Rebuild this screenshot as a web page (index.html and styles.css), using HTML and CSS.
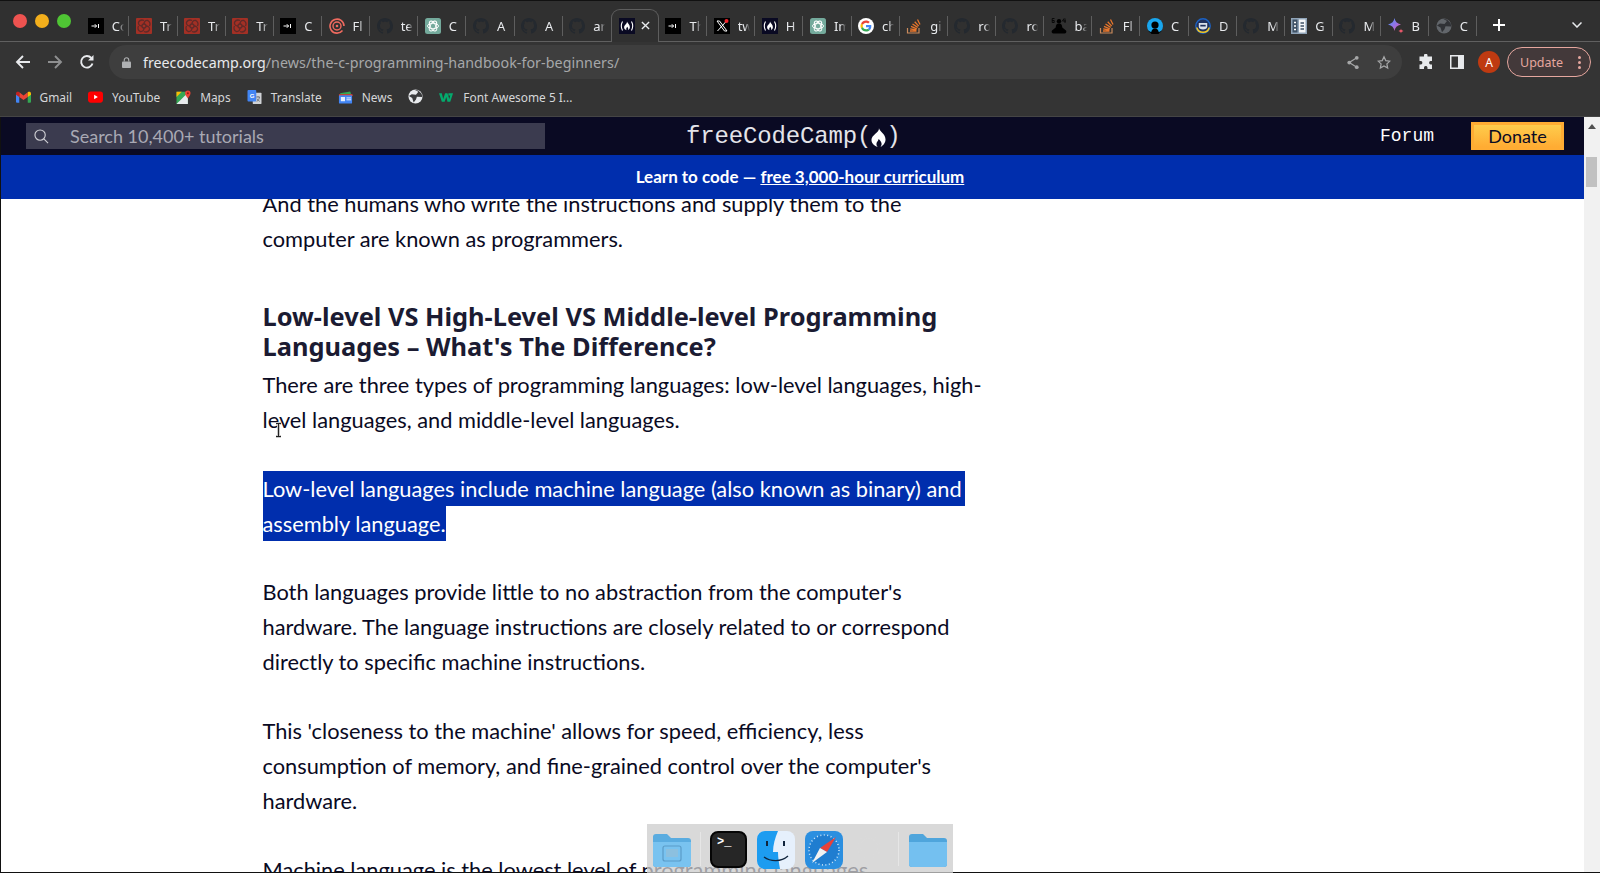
FILE: index.html
```html
<!DOCTYPE html>
<html lang="en">
<head>
<meta charset="utf-8">
<title>The C Programming Handbook for Beginners</title>
<link rel="stylesheet" href="styles.css">
</head>
<body>
<svg class="defs" width="0" height="0" aria-hidden="true">
  <symbol id="i-term" viewBox="0 0 16 16"><rect width="16" height="16" fill="#000"/><path d="M3.500 8h5M6.800 6.200 8.600 8 6.800 9.800M10.500 6v4" fill="none" stroke="#fff" stroke-width="1"/></symbol>
  <symbol id="i-red" viewBox="0 0 16 16"><rect width="16" height="16" rx="1" fill="#a33025"/><g fill="none" stroke="#5f2a28" stroke-width="1.300"><circle cx="8" cy="8" r="2"/><path d="M8 6c0-2 1-4 4-3.500M10 8c2 0 4 1 3.500 4M8 10c0 2-1 4-4 3.500M6 8c-2 0-4-1-3.500-4"/><path d="M12 2.500C14 4 14.500 6 13.500 8M13.500 12c-1.500 2-3.500 2.500-5.500 1.500M4 13.500C2 12 1.500 10 2.500 8M2.500 4C4 2 6 1.500 8 2.500"/></g></symbol>
  <symbol id="i-at" viewBox="0 0 16 16"><g fill="none" stroke="#ef6a5f"><path d="M13.500 12.500A7 7 0 1 1 15 8" stroke-width="1.600"/><circle cx="8" cy="8" r="4" stroke-width="1.400"/><circle cx="8" cy="8" r="1.300" fill="#ef6a5f" stroke="none"/></g></symbol>
  <symbol id="i-gh" viewBox="0 0 16 16"><path fill="#24292f" d="M8 0C3.580 0 0 3.580 0 8c0 3.540 2.290 6.530 5.470 7.590.4.070.55-.17.55-.38 0-.19-.01-.82-.01-1.490-2.010.37-2.530-.49-2.690-.94-.09-.23-.48-.94-.82-1.130-.28-.15-.68-.52-.01-.53.63-.01 1.080.58 1.230.82.72 1.210 1.870.87 2.330.66.070-.52.28-.87.51-1.070-1.780-.2-3.640-.89-3.640-3.950 0-.87.31-1.590.82-2.150-.08-.2-.36-1.020.08-2.120 0 0 .67-.21 2.200.82.64-.18 1.320-.27 2-.27s1.360.09 2 .27c1.530-1.040 2.200-.82 2.200-.82.44 1.100.16 1.920.08 2.120.51.56.82 1.270.82 2.150 0 3.070-1.870 3.750-3.650 3.950.29.25.54.73.54 1.480 0 1.070-.01 1.930-.01 2.200 0 .21.15.46.55.38A8.013 8.013 0 0016 8c0-4.420-3.580-8-8-8z"/></symbol>
  <symbol id="i-gpt" viewBox="0 0 16 16"><rect width="16" height="16" rx="2.500" fill="#74aa9c"/><g fill="none" stroke="#fff" stroke-width=".9"><ellipse cx="8" cy="8" rx="5.500" ry="2.700"/><ellipse cx="8" cy="8" rx="5.500" ry="2.700" transform="rotate(60 8 8)"/><ellipse cx="8" cy="8" rx="5.500" ry="2.700" transform="rotate(120 8 8)"/></g></symbol>
  <symbol id="i-fcc" viewBox="0 0 16 16"><rect width="16" height="16" fill="#0a0a23"/><path d="M3.500 3.500C1.900 6.500 1.900 9.500 3.500 12.500M12.500 3.500c1.600 3 1.600 6 0 9" fill="none" stroke="#fff" stroke-width="1.100"/><path d="M8 3.500c.4 1.700 3 3.200 2.900 5.800-.1 1.700-1.400 2.700-2 2.900.7-1.100.3-2.300-.8-3.400-.4 1.200-.9 1.400-.9 2.300 0 .5.2.9.4 1.100-1.300-.2-2.500-1.200-2.500-2.900C5.100 7 8.200 6 8 3.500z" fill="#fff"/></symbol>
  <symbol id="i-x" viewBox="0 0 16 16"><rect width="16" height="16" fill="#000"/><path d="M3 3h2.500L13 13h-2.500zM12.500 3 3.500 13" fill="none" stroke="#fff" stroke-width="1"/><circle cx="12.500" cy="3" r="2" fill="#f0222a"/></symbol>
  <symbol id="i-google" viewBox="0 0 48 48"><circle cx="24" cy="24" r="24" fill="#fff"/><g transform="translate(7.500 7.500) scale(.69)"><path fill="#EA4335" d="M24 9.500c3.540 0 6.710 1.220 9.210 3.600l6.850-6.850C35.900 2.380 30.470 0 24 0 14.620 0 6.510 5.380 2.560 13.220l7.980 6.190C12.430 13.720 17.740 9.500 24 9.500z"/><path fill="#4285F4" d="M46.980 24.550c0-1.570-.15-3.090-.38-4.550H24v9.020h12.940c-.58 2.960-2.260 5.480-4.780 7.180l7.730 6c4.510-4.180 7.090-10.360 7.090-17.650z"/><path fill="#FBBC05" d="M10.530 28.590c-.48-1.450-.76-2.990-.76-4.590s.27-3.140.76-4.590l-7.980-6.190C.92 16.460 0 20.120 0 24c0 3.880.92 7.540 2.560 10.780l7.970-6.190z"/><path fill="#34A853" d="M24 48c6.480 0 11.930-2.130 15.890-5.810l-7.730-6c-2.150 1.450-4.920 2.300-8.160 2.300-6.260 0-11.570-4.220-13.470-9.910l-7.980 6.190C6.510 42.620 14.620 48 24 48z"/></g></symbol>
  <symbol id="i-so" viewBox="0 0 16 16"><path d="M1.500 10v5h11.500v-5" fill="none" stroke="#c98a5c" stroke-width="1.200"/><path d="M4 13h6.500M4.200 10.800l6.200 1.200M5 8.400l5.800 2.500M6.500 6l5.200 3.400M8.700 3.800l4 4.300M11.500 1.500l2.500 5" fill="none" stroke="#e8762c" stroke-width="1.300"/></symbol>
  <symbol id="i-med" viewBox="0 0 16 16"><circle cx="8" cy="3.200" r="2.200" fill="#000"/><path d="M8 5.500c-2.500 0-3 1.500-3.300 4L1 12.500c-1 1 0 3 1.500 3h11c1.500 0 2.500-2 1.500-3l-3.700-3C11 7 10.500 5.500 8 5.500z" fill="#000"/><path d="M3.500.5H1.200v2h2v2H1.200v-2M13 .5l-1.500 2.500h3.500M14 .5v4.500" stroke="#000" stroke-width=".8" fill="none"/></symbol>
  <symbol id="i-blue" viewBox="0 0 16 16"><circle cx="8" cy="8" r="8" fill="#19a6ee"/><circle cx="8" cy="7" r="3.600" fill="#000"/><path d="M4.200 16c-.3-3.500 1.500-5.500 3.800-5.500s4.100 2 3.800 5.500z" fill="#000"/><path d="M1 12.500C2.500 15 5 16 8 16s5.500-1 7-3.500L12 14H4z" fill="#000"/></symbol>
  <symbol id="i-d" viewBox="0 0 16 16"><circle cx="8" cy="8" r="7.200" fill="#20305c" stroke="#1c62c4" stroke-width="1.400"/><path d="M1 9.500a7.200 7.200 0 0 0 14 0h-1.600a5.600 5.600 0 0 1-10.800 0z" fill="#f3c623"/><path d="M3.800 5h8.400v4c0 1.500-2 2.500-4.200 2.500S3.800 10.500 3.800 9z" fill="#d9dfe8"/><rect x="5.300" y="6.800" width="5.400" height="1.700" fill="#20305c"/></symbol>
  <symbol id="i-cols" viewBox="0 0 16 16"><rect width="16" height="16" fill="#90a4b8"/><rect x="1.500" y="1.500" width="5" height="13" fill="#3f5266"/><rect x="8" y="1.500" width="6.500" height="13" fill="#f4f6f8"/><path d="M3 4.500h2M3 8h2M3 11.500h2" stroke="#fff" stroke-width="1.600"/><path d="M9.500 5H13M9.500 8H13M9.500 11H13" stroke="#3f5266" stroke-width="1.600"/></symbol>
  <symbol id="i-bard" viewBox="0 0 16 16"><defs><linearGradient id="bardg" x1="0" y1="0" x2="1" y2="1"><stop offset="0" stop-color="#3f9bf5"/><stop offset=".55" stop-color="#9a6fe4"/><stop offset="1" stop-color="#e8596b"/></linearGradient></defs><path d="M6.500 0C7 3.500 9 5.500 13 6.500 9 7.500 7 9.500 6.500 13 6 9.500 4 7.500 0 6.500 4 5.500 6 3.500 6.500 0z" fill="url(#bardg)"/><path d="M13 10.500c.2 1.300 1 2.100 2.500 2.500-1.500.4-2.300 1.200-2.500 2.500-.2-1.300-1-2.100-2.500-2.500 1.500-.4 2.300-1.200 2.500-2.500z" fill="#e8596b"/></symbol>
  <symbol id="i-globe" viewBox="0 0 16 16"><circle cx="8" cy="8" r="7.500" fill="#62666b"/><path d="M7 .8 11 3 8.500 6 4 5.500 1 7.500l3.500 2 1.500 4.800 2.500-3 1-3 5.800.3-.8-3.500L11 1.500z" fill="#303236"/></symbol>
</svg>

<header class="chrome">
  <div class="tabstrip">
    <div class="lights"><span class="light red"></span><span class="light yellow"></span><span class="light green"></span></div>
    <div class="tab"><svg class="fav"><use href="#i-term"/></svg><span class="tab-title">Co</span></div>
    <div class="tab"><svg class="fav"><use href="#i-red"/></svg><span class="tab-title">Tr</span></div>
    <div class="tab"><svg class="fav"><use href="#i-red"/></svg><span class="tab-title">Tr</span></div>
    <div class="tab"><svg class="fav"><use href="#i-red"/></svg><span class="tab-title">Tr</span></div>
    <div class="tab"><svg class="fav"><use href="#i-term"/></svg><span class="tab-title">C</span></div>
    <div class="tab"><svg class="fav"><use href="#i-at"/></svg><span class="tab-title">Fl</span></div>
    <div class="tab"><svg class="fav"><use href="#i-gh"/></svg><span class="tab-title">te</span></div>
    <div class="tab"><svg class="fav"><use href="#i-gpt"/></svg><span class="tab-title">C</span></div>
    <div class="tab"><svg class="fav"><use href="#i-gh"/></svg><span class="tab-title">A</span></div>
    <div class="tab"><svg class="fav"><use href="#i-gh"/></svg><span class="tab-title">A</span></div>
    <div class="tab no-sep"><svg class="fav"><use href="#i-gh"/></svg><span class="tab-title">ar</span></div>
    <div class="tab active"><svg class="fav"><use href="#i-fcc"/></svg><svg class="tab-close" viewBox="0 0 10 10"><path d="M1 1l8 8M9 1l-8 8"/></svg></div>
    <div class="tab"><svg class="fav"><use href="#i-term"/></svg><span class="tab-title">Th</span></div>
    <div class="tab"><svg class="fav"><use href="#i-x"/></svg><span class="tab-title">tw</span></div>
    <div class="tab"><svg class="fav"><use href="#i-fcc"/></svg><span class="tab-title">H</span></div>
    <div class="tab"><svg class="fav"><use href="#i-gpt"/></svg><span class="tab-title">Im</span></div>
    <div class="tab"><svg class="fav"><use href="#i-google"/></svg><span class="tab-title">ch</span></div>
    <div class="tab"><svg class="fav"><use href="#i-so"/></svg><span class="tab-title">gi</span></div>
    <div class="tab"><svg class="fav"><use href="#i-gh"/></svg><span class="tab-title">ro</span></div>
    <div class="tab"><svg class="fav"><use href="#i-gh"/></svg><span class="tab-title">ro</span></div>
    <div class="tab"><svg class="fav"><use href="#i-med"/></svg><span class="tab-title">ba</span></div>
    <div class="tab"><svg class="fav"><use href="#i-so"/></svg><span class="tab-title">Fl</span></div>
    <div class="tab"><svg class="fav"><use href="#i-blue"/></svg><span class="tab-title">C</span></div>
    <div class="tab"><svg class="fav"><use href="#i-d"/></svg><span class="tab-title">D</span></div>
    <div class="tab"><svg class="fav"><use href="#i-gh"/></svg><span class="tab-title">M</span></div>
    <div class="tab"><svg class="fav"><use href="#i-cols"/></svg><span class="tab-title">G</span></div>
    <div class="tab"><svg class="fav"><use href="#i-gh"/></svg><span class="tab-title">M</span></div>
    <div class="tab"><svg class="fav"><use href="#i-bard"/></svg><span class="tab-title">B</span></div>
    <div class="tab"><svg class="fav"><use href="#i-globe"/></svg><span class="tab-title">C</span></div>
    <svg class="new-tab" viewBox="0 0 12 12"><path d="M6 0v12M0 6h12"/></svg>
    <svg class="tab-menu" viewBox="0 0 10 6"><path d="M.5.500 5 5 9.500.500"/></svg>
  </div>

  <div class="toolbar">
    <svg class="nav-icon" viewBox="0 0 16 16"><path d="M15 8H2M8 2 2 8l6 6"/></svg>
    <svg class="nav-icon dim" viewBox="0 0 16 16"><path d="M1 8h13M8 2l6 6-6 6"/></svg>
    <svg class="nav-icon" viewBox="0 0 16 16"><path d="M13.500 9.500A5.800 5.800 0 1 1 12.300 4"/><path class="solid" d="M14.500 1v5.500H9z"/></svg>
    <div class="omnibox">
      <svg class="lock" viewBox="0 0 10 12"><path d="M2.500 5V3.200a2.500 2.500 0 0 1 5 0V5" fill="none" stroke="#aeb0b2" stroke-width="1.200"/><rect y="5" width="10" height="7" rx="1" fill="#aeb0b2"/></svg>
      <span class="url"><span class="host">freecodecamp.org</span>/news/the-c-programming-handbook-for-beginners/</span>
      <span class="omni-actions">
        <svg class="omni-icon" viewBox="0 0 14 16"><circle cx="11" cy="3" r="2"/><circle cx="3" cy="8" r="2"/><circle cx="11" cy="13" r="2"/><path d="M11 3 3 8l8 5" fill="none" stroke="#a6a7a8" stroke-width="1.300"/></svg>
        <svg class="omni-icon star" viewBox="0 0 16 16"><path d="M8 1.500l2 4.300 4.700.6-3.400 3.200.9 4.700L8 12l-4.200 2.300.9-4.700L1.300 6.400 6 5.800z"/></svg>
      </span>
    </div>
    <svg class="tool-icon" viewBox="0 0 16 16"><path d="M6 1a1.800 1.800 0 0 1 3.500 0v1.500H14V7h-1.500a1.800 1.800 0 0 0 0 3.500H14V15H9.500v-1.500a1.800 1.800 0 0 0-3.500 0V15H1.500v-4.500H3A1.800 1.800 0 0 0 3 7H1.500V2.500H6z"/></svg>
    <svg class="side-icon" viewBox="0 0 14 14"><rect x=".75" y=".75" width="12.500" height="12.500" fill="none" stroke="#e8eaed" stroke-width="1.500"/><rect x="8" y="1" width="5" height="12" fill="#e8eaed"/></svg>
    <span class="avatar">A</span>
    <div class="update"><span>Update</span><span class="dots"><i></i><i></i><i></i></span></div>
  </div>

  <nav class="bookmarks">
    <a class="bm"><svg class="bm-icon" viewBox="0 0 16 12"><path d="M0 2v9a1 1 0 0 0 1 1h2.500V5.500z" fill="#4285f4"/><path d="M16 2v9a1 1 0 0 1-1 1h-2.500V5.500z" fill="#34a853"/><path d="M12.500 1v5L8 9.300 3.500 6V1L8 4.500z" fill="#ea4335"/><path d="M0 2.500C0 .5 2 0 3.500 1v5L0 3.500z" fill="#c5221f"/><path d="M16 2.500c0-2-2-2.500-3.500-1.500v5L16 3.500z" fill="#fbbc04"/></svg>Gmail</a>
    <a class="bm"><svg class="bm-icon" viewBox="0 0 16 12"><rect width="16" height="12" rx="3" fill="#f00"/><path d="M6.500 3.500v5l4-2.500z" fill="#fff"/></svg>YouTube</a>
    <a class="bm"><svg class="bm-icon" viewBox="0 0 16 16"><rect y="2" width="13" height="14" fill="#34a853"/><path d="M0 16 13 3v13z" fill="#e8eaed"/><path d="M0 2h6L0 8z" fill="#fbbc04"/><path d="M13 .5a3.200 3.200 0 0 0-3.200 3.200C9.800 6 13 9.500 13 9.500s3-3.500 3-5.800A3.100 3.100 0 0 0 13 .5z" fill="#ea4335"/><circle cx="13" cy="3.700" r="1.100" fill="#8c1c13"/></svg>Maps</a>
    <a class="bm"><svg class="bm-icon" viewBox="0 0 16 16"><rect x="6" y="3" width="10" height="13" rx="1" fill="#cfd2d6"/><rect width="10" height="13" rx="1" fill="#4285f4"/><text class="bm-g" x="2.500" y="9.500">G</text><path d="M10 8h4M12 7v1M10.500 13c2-1 3-3 3.200-5M11 10c.7 1.500 1.800 2.500 3 3" fill="none" stroke="#5f6368" stroke-width=".9"/></svg>Translate</a>
    <a class="bm"><svg class="bm-icon" viewBox="0 0 16 14"><path d="M2 3 13 1l1 3H3z" fill="#34a853"/><path d="M1 4h14l1 1-1 1H1z" fill="#ea4335"/><rect x="1" y="5" width="14" height="9" rx="1" fill="#4285f4"/><rect x="3" y="7" width="4.500" height="4.500" fill="#fff" opacity=".85"/><path d="M9 8h5M9 10h5" stroke="#fff"/></svg>News</a>
    <a class="bm"><svg class="bm-icon round" viewBox="0 0 16 16"><circle cx="8" cy="8" r="7.500" fill="#e8eaed"/><path d="M7 .8 11 3 8.500 6 4 5.500 1 7.500l3.500 2 1.500 4.800 2.500-3 1-3 5.800.3-.8-3.500L11 1.500z" fill="#3a3b3d"/></svg></a>
    <a class="bm"><svg class="bm-icon" viewBox="0 0 16 12"><path d="M0 2h3l1.500 6L6.500 2H9l2 6 1-3.500h-2V2h5l-3 9H9L7.800 6 6 11H3z" fill="#04aa6d"/></svg>Font Awesome 5 I...</a>
  </nav>
</header>

<div class="page">
  <div class="viewport">
    <div class="site-nav">
      <div class="search">
        <svg class="search-icon" viewBox="0 0 16 16"><circle cx="6.500" cy="6.500" r="5.500"/><path d="M10.500 10.500 15 15"/></svg>
        <span>Search 10,400+ tutorials</span>
      </div>
      <div class="logo">freeCodeCamp(<svg class="flame" viewBox="0 0 16 20"><path d="M8.500 0c.6 3.200 7 6 7 12 0 3.800-2.900 6.700-5.300 8 2.200-2.600 1-5.400-2-8.300-1 2.900-2.400 3.300-2.400 5.200 0 1.300.6 2.400 1.300 3.100C4 19.200.5 16.800.5 12.500.5 7 9 4.800 8.500 0z"/></svg>)</div>
      <div class="nav-actions">
        <span class="forum">Forum</span>
        <span class="donate">Donate</span>
      </div>
    </div>
    <div class="banner">Learn to code — <a class="banner-link">free 3,000-hour curriculum</a></div>
    <main class="article-clip">
      <article class="article">
        <p>And the humans who write the instructions and supply them to the<br>computer are known as programmers.</p>
        <h2>Low-level VS High-Level VS Middle-level Programming<br>Languages – What's The Difference?</h2>
        <p class="after-heading">There are three types of programming languages: low-level languages, high-<br>level languages, and middle-level languages.</p>
        <p class="selected"><span class="sel first">Low-level languages include machine language (also known as binary) and</span><span class="sel">assembly language.</span></p>
        <p class="after-selected">Both languages provide little to no abstraction from the computer's<br>hardware. The language instructions are closely related to or correspond<br>directly to specific machine instructions.</p>
        <p>This 'closeness to the machine' allows for speed, efficiency, less<br>consumption of memory, and fine-grained control over the computer's<br>hardware.</p>
        <p>Machine language is the lowest level of programming languages.</p>
      </article>
    </main>
  </div>
  <div class="scrollbar">
    <span class="scroll-up"></span>
    <span class="scroll-thumb"></span>
  </div>
</div>

<svg class="cursor" viewBox="0 0 9 17"><path d="M2 1.500h5M4.500 1.500v13M2 14.500h5" fill="none" stroke="#c9c9c9" stroke-width="3"/><path d="M2 1.500h5M4.500 1.500v13M2 14.500h5" fill="none" stroke="#222" stroke-width="1"/></svg>

<div class="dock">
  <svg class="dock-folder" viewBox="0 0 40 34"><path d="M1 4a3 3 0 0 1 3-3h11l4 4h17a3 3 0 0 1 3 3v23a3 3 0 0 1-3 3H4a3 3 0 0 1-3-3z" fill="#5aace0"/><path d="M1 9h38v22a3 3 0 0 1-3 3H4a3 3 0 0 1-3-3z" fill="#79c3f0"/><rect x="11" y="13" width="18" height="15" rx="2" fill="none" stroke="#5a9cc8" stroke-width="1.200"/><rect x="14" y="16" width="12" height="8" fill="#8cc0df"/></svg>
  <span class="dock-sep"></span>
  <div class="dock-term"><span>&gt;_</span></div>
  <svg class="dock-app" viewBox="0 0 38 38"><rect width="38" height="38" rx="8" fill="#e6f0fc"/><path d="M8 0h13c-3 7-5 14-5 21h5c0 6 1 11 2 17H8a8 8 0 0 1-8-8V8a8 8 0 0 1 8-8z" fill="#1d9cf0"/><path d="M10 10v5M27 10v5" stroke="#10243c" stroke-width="2" fill="none"/><path d="M7 26c7 5 17 5 24-1" stroke="#10243c" stroke-width="1.400" fill="none"/></svg>
  <svg class="dock-app" viewBox="0 0 38 38"><rect width="38" height="38" rx="8" fill="#2b8fe0"/><circle cx="19" cy="19" r="15" fill="#1f7dd0" stroke="#cfe6f8" stroke-width="1.500" stroke-dasharray="1 2.500"/><path d="M31 6 15 17l7 4z" fill="#e8413a"/><path d="M7 32l8-15 7 4z" fill="#f2f2f2"/></svg>
  <svg class="dock-app faded" viewBox="0 0 38 38"><circle cx="16" cy="16" r="10" fill="none" stroke="#dadada" stroke-width="3"/><path d="M23 23l11 11" stroke="#dadada" stroke-width="4"/></svg>
  <span class="dock-sep last"></span>
  <svg class="dock-folder" viewBox="0 0 40 34"><path d="M1 4a3 3 0 0 1 3-3h11l4 4h17a3 3 0 0 1 3 3v23a3 3 0 0 1-3 3H4a3 3 0 0 1-3-3z" fill="#4fa5dc"/><path d="M1 9h38v22a3 3 0 0 1-3 3H4a3 3 0 0 1-3-3z" fill="#74c0f0"/></svg>
</div>
</body>
</html>
```

FILE: styles.css
```css
* { box-sizing: border-box; }

html, body {
  margin: 0;
  height: 873px;
  overflow: hidden;
}

body {
  display: flex;
  flex-direction: column;
  background: #fff;
  font-family: "Noto Sans", sans-serif;
}

.defs { position: absolute; }

/* browser chrome */
.chrome {
  flex: none;
  height: 117px;
  background: #343434;
  color: #e8eaed;
  border-bottom: 1px solid #454545;
}

.tabstrip {
  position: relative;
  display: flex;
  align-items: flex-end;
  height: 42px;
  padding-left: 81.300px;
  background: #303030;
  border-top: 1px solid #111;
  border-bottom: 1px solid #606060;
}

.lights {
  position: absolute;
  top: 13px;
  left: 13px;
  display: flex;
  gap: 8px;
}

.light { width: 14px; height: 14px; border-radius: 50%; }
.red { background: #ee5350; }
.yellow { background: #f3af1c; }
.green { background: #4fc534; }

.tab {
  position: relative;
  flex: none;
  display: flex;
  align-items: center;
  width: 48.150px;
  height: 20px;
  margin-bottom: 5px;
  padding-left: 6.500px;
  border-right: 1px solid #5e5e5e;
}

.tab.no-sep { border-right: 0; }

.tab.active {
  height: 33px;
  margin-bottom: -1px;
  padding: 3px 0 4px 7px;
  border: 1px solid #5e5e5e;
  border-bottom: 0;
  border-radius: 9px 9px 0 0;
  background: #303030;
}

.fav { flex: none; width: 16px; height: 16px; }

.tab-title {
  width: 12px;
  margin-left: 8px;
  overflow: hidden;
  font-size: 13px;
  line-height: 16px;
  white-space: nowrap;
  color: #e8eaed;
  -webkit-mask-image: linear-gradient(90deg, #000 55%, transparent);
  mask-image: linear-gradient(90deg, #000 55%, transparent);
}

.tab-close {
  width: 9px;
  height: 9px;
  margin-left: 6px;
  fill: none;
  stroke: #e8eaed;
  stroke-width: 1.500;
}

.new-tab {
  position: absolute;
  top: 18px;
  left: 1493px;
  width: 12px;
  height: 12px;
  fill: none;
  stroke: #fff;
  stroke-width: 2;
}

.tab-menu {
  position: absolute;
  top: 21px;
  left: 1572px;
  width: 10px;
  height: 6px;
  fill: none;
  stroke: #e8eaed;
  stroke-width: 1.500;
}

.toolbar {
  display: flex;
  align-items: center;
  height: 40px;
  padding: 0 9px 0 15px;
}

.nav-icon {
  flex: none;
  width: 16px;
  height: 16px;
  margin-right: 16px;
  fill: none;
  stroke: #e8eaed;
  stroke-width: 1.900;
}

.nav-icon.dim { stroke: #8e8f90; }
.nav-icon .solid { fill: #e8eaed; stroke: none; }

.omnibox {
  display: flex;
  align-items: center;
  width: 1294px;
  height: 34px;
  margin-left: -2px;
  padding-left: 13px;
  border-radius: 17px;
  background: #3e3e3e;
}

.lock { width: 9px; height: 11px; margin-right: 12px; }

.url {
  font-size: 14.250px;
  color: #a6a8aa;
  letter-spacing: .065px;
  white-space: nowrap;
}

.host { color: #e8eaed; letter-spacing: 0; }

.omni-actions {
  display: flex;
  align-items: center;
  gap: 17px;
  margin-left: auto;
  margin-right: 11px;
}

.omni-icon { width: 14px; height: 15px; fill: #a6a7a8; }
.omni-icon.star { fill: none; stroke: #a6a7a8; stroke-width: 1.400; }

.tool-icon { width: 16px; height: 16px; margin-left: 16px; fill: #e8eaed; }
.side-icon { width: 14px; height: 14px; margin-left: 16px; }

.avatar {
  display: flex;
  align-items: center;
  justify-content: center;
  width: 22px;
  height: 22px;
  margin-left: 14px;
  border-radius: 50%;
  background: #bf3a11;
  font-size: 12px;
  color: #fff;
}

.update {
  display: flex;
  align-items: center;
  justify-content: space-between;
  width: 84px;
  height: 30px;
  margin-left: 7px;
  padding: 0 9px 0 12px;
  border: 1px solid #e6a79f;
  border-radius: 15px;
  background: #43393a;
  font-size: 12.500px;
  color: #e6a79f;
}

.dots { display: flex; flex-direction: column; gap: 2px; }
.dots i { display: block; width: 3px; height: 3px; border-radius: 50%; background: #e6a79f; }

.bookmarks {
  display: flex;
  align-items: center;
  gap: 16px;
  height: 29px;
  padding-left: 15.500px;
  font-size: 11.900px;
  color: #d6d7d9;
}

.bm { display: flex; align-items: center; gap: 9px; white-space: nowrap; }
.bm-icon { flex: none; width: 15px; height: 14px; }
.bm-icon.round { width: 15px; height: 15px; }
.bm-g { font-size: 7px; font-weight: 700; fill: #fff; font-family: "Liberation Sans", sans-serif; }

/* page */
.page {
  flex: 1;
  display: flex;
  min-height: 0;
  border-left: 1px solid #111;
  border-bottom: 1px solid #111;
}

.viewport {
  flex: 1;
  display: flex;
  flex-direction: column;
  min-width: 0;
}

.site-nav {
  position: relative;
  flex: none;
  display: flex;
  align-items: center;
  justify-content: space-between;
  height: 38px;
  padding: 0 20px 0 25px;
  background: #0a0a23;
}

.search {
  display: flex;
  align-items: center;
  width: 519px;
  height: 26px;
  padding-left: 8px;
  background: #3b3b4f;
  font-family: Lato, sans-serif;
  font-size: 18px;
  color: #a9a9b4;
}

.search-icon {
  width: 15px;
  height: 15px;
  margin-right: 21px;
  fill: none;
  stroke: #d0d0d5;
  stroke-width: 1.200;
}

.logo {
  position: absolute;
  top: 5px;
  left: 685px;
  display: flex;
  align-items: center;
  font-family: "Liberation Mono", monospace;
  font-size: 24px;
  line-height: 30px;
  color: #e4e4ea;
  letter-spacing: -.15px;
}

.flame { width: 15px; height: 19px; fill: #fff; }

.nav-actions { display: flex; align-items: center; gap: 37px; }

.forum {
  font-family: "Liberation Mono", monospace;
  font-size: 18px;
  color: #fff;
}

.donate {
  display: flex;
  align-items: center;
  justify-content: center;
  width: 93px;
  height: 28px;
  border: 3px solid #ffac33;
  background: linear-gradient(#fecc4c, #ffac33);
  font-family: Lato, sans-serif;
  font-size: 18px;
  color: #0a0a23;
}

.banner {
  flex: none;
  height: 44px;
  padding-left: 15px;
  background: #002ead;
  font-family: Lato, sans-serif;
  font-size: 17px;
  font-weight: 700;
  line-height: 43px;
  text-align: center;
  color: #fff;
}

.banner-link { text-decoration: underline; }

.article-clip {
  flex: 1;
  min-height: 0;
  overflow: hidden;
}

.article {
  margin-top: -13px;
  padding-left: 261.500px;
  font-family: Lato, sans-serif;
  font-size: 21.800px;
  line-height: 35px;
  color: #0a0a23;
}

.article p { margin: 0 0 33.500px; white-space: nowrap; }
.article p.after-heading { margin-bottom: 34.500px; }
.article p.selected { margin-bottom: 32.500px; }
.article p.after-selected { margin-bottom: 34.500px; }

.article h2 {
  margin: 45px 0 5.500px;
  font-family: "Noto Sans", sans-serif;
  font-size: 25.400px;
  font-weight: 700;
  line-height: 30px;
  color: #1b1b32;
  white-space: nowrap;
}

.sel {
  display: block;
  width: fit-content;
  background: #002ead;
  color: #fff;
}

.sel.first { padding-right: 3px; }

.scrollbar {
  position: relative;
  flex: none;
  width: 16px;
  background: #f1f1f1;
}

.scroll-up {
  position: absolute;
  top: 7px;
  left: 4px;
  width: 0;
  height: 0;
  border: 4px solid transparent;
  border-top: 0;
  border-bottom: 5px solid #505050;
}

.scroll-thumb {
  position: absolute;
  top: 40px;
  left: 2px;
  width: 11px;
  height: 30px;
  background: #c1c1c1;
}

/* overlays */
.cursor {
  position: absolute;
  top: 422px;
  left: 274px;
  width: 9px;
  height: 17px;
}

.dock {
  position: absolute;
  top: 824px;
  left: 647px;
  display: flex;
  align-items: flex-start;
  width: 306px;
  height: 49px;
  padding: 7px 5px 0 5px;
  background: rgba(205, 205, 205, .76);
}

.dock-folder { flex: none; width: 40px; height: 34px; margin-top: 2px; }

.dock-sep {
  flex: none;
  width: 1px;
  height: 34px;
  margin: 1px 9px 0 8px;
  background: #e6e6e6;
}

.dock-sep.last { margin-left: 7px; }

.dock-term {
  flex: none;
  width: 37px;
  height: 37px;
  margin-right: 10px;
  padding: 2px 0 0 5px;
  border: 2px solid #050505;
  border-radius: 8px;
  background: #262626;
  font-family: "Liberation Mono", monospace;
  font-size: 12px;
  font-weight: 700;
  color: #fff;
}

.dock-app { flex: none; width: 38px; height: 38px; margin-right: 10px; }
.dock-app.faded { opacity: .8; margin-right: 0; }
```
